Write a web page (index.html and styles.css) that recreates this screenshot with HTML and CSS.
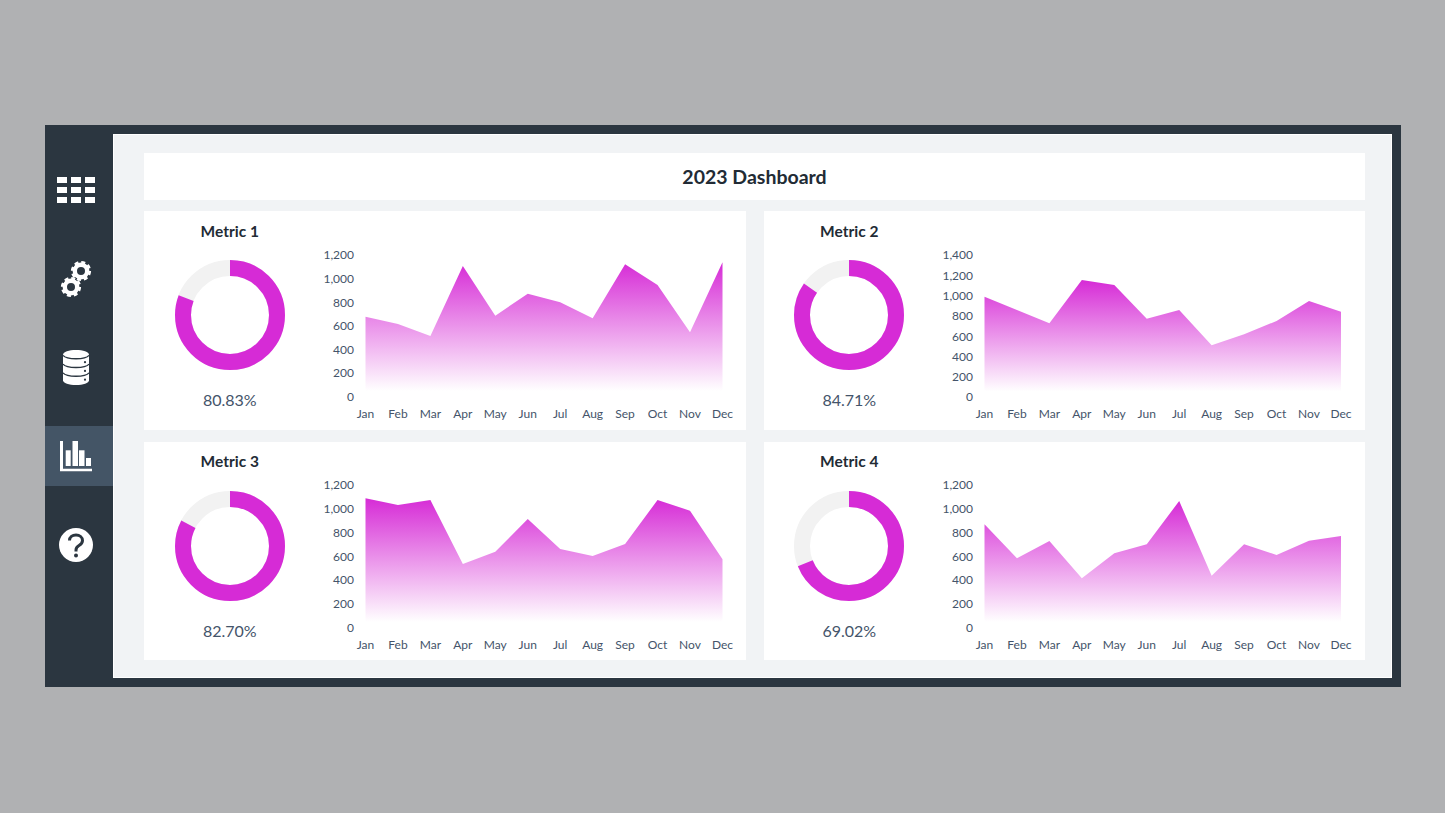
FILE: index.html
```html
<!DOCTYPE html>
<html lang="en">
<head>
    <meta charset="UTF-8">
    <title>2023 Dashboard</title>
    <link rel="stylesheet" href="styles.css">
</head>
<body>
    <div class="frame">
        <nav class="sidebar">
            <a class="nav-item" href="#">
                <svg class="icon" width="38" height="26" viewBox="0 0 38 26" fill="#fff">
                    <rect x="0" y="0" width="10" height="6"/><rect x="14" y="0" width="10" height="6"/><rect x="28" y="0" width="10" height="6"/>
                    <rect x="0" y="10" width="10" height="6"/><rect x="14" y="10" width="10" height="6"/><rect x="28" y="10" width="10" height="6"/>
                    <rect x="0" y="20" width="10" height="6"/><rect x="14" y="20" width="10" height="6"/><rect x="28" y="20" width="10" height="6"/>
                </svg>
            </a>
            <a class="nav-item" href="#">
                <svg class="icon" width="32" height="38" viewBox="0 0 32 38" fill="none" stroke="#fff">
                    <circle cx="21" cy="11" r="6.2" stroke-width="4.4"/>
                    <circle cx="21" cy="11" r="8.8" stroke-width="2.6" stroke-dasharray="4 2.91"/>
                    <circle cx="11" cy="27" r="6.2" stroke-width="4.4"/>
                    <circle cx="11" cy="27" r="8.8" stroke-width="2.6" stroke-dasharray="4 2.91"/>
                </svg>
            </a>
            <a class="nav-item" href="#">
                <svg class="icon" width="28" height="35" viewBox="0 0 28 36" preserveAspectRatio="none">
                    <path fill="#fff" d="M1 5C1 2 7 0 14 0s13 2 13 5v26c0 3-6 5-13 5S1 34 1 31z"/>
                    <path fill="none" stroke="#2b3640" stroke-width="1.4" d="M1 5.5C3 8 8 9 14 9s11-1 13-3.5M1 14.5C3 17 8 18 14 18s11-1 13-3.5M1 23.5C3 26 8 27 14 27s11-1 13-3.5"/>
                    <circle cx="23" cy="12.5" r="1.1" fill="#2b3640"/>
                    <circle cx="23" cy="21.5" r="1.1" fill="#2b3640"/>
                    <circle cx="23" cy="30.5" r="1.1" fill="#2b3640"/>
                </svg>
            </a>
            <a class="nav-item active" href="#">
                <svg class="icon" width="32" height="31" viewBox="0 0 32 31" fill="#fff">
                    <path d="M0 0h3v27.7h29v2.6H0z"/>
                    <rect x="5.7" y="9.3" width="5" height="15.7"/>
                    <rect x="12.5" y="0" width="5.5" height="25"/>
                    <rect x="19" y="9.3" width="5.5" height="15.7"/>
                    <rect x="26" y="17" width="5" height="8"/>
                </svg>
            </a>
            <a class="nav-item" href="#">
                <svg class="icon" width="34" height="34" viewBox="0 0 34 34">
                    <circle cx="17" cy="17" r="17" fill="#fff"/>
                    <path fill="none" stroke="#2b3640" stroke-width="3" d="M10.5 12.5C10.5 9 13.500 7 17 7c3.700 0 6.500 2.300 6.500 5.500 0 2.500-1.500 3.800-3.500 5-2 1.200-3 2.200-3 4.500v1.500"/>
                    <circle cx="17" cy="27.5" r="2" fill="#2b3640"/>
                </svg>
            </a>
        </nav>
        <main class="content">
            <header class="title-bar"><h1>2023 Dashboard</h1></header>
            <div class="cards">

                <section class="card">
                    <div class="metric">
                        <h2>Metric 1</h2>
                        <svg class="donut" width="110" height="110" viewBox="0 0 110 110">
                            <circle class="donut-track" cx="55" cy="55" r="47"/>
                            <circle class="donut-value" cx="55" cy="55" r="47" pathLength="100" stroke-dasharray="80.83 100"/>
                        </svg>
                        <p class="percent">80.83%</p>
                    </div>
                    <svg class="chart" width="429.5" height="218" viewBox="0 0 429.5 218">
                        <defs>
                            <linearGradient id="fill1" gradientUnits="userSpaceOnUse" x1="0" y1="51" x2="0" y2="180">
                                <stop offset="0" stop-color="#d62bd6"/><stop offset="1" stop-color="#d62bd6" stop-opacity="0"/>
                            </linearGradient>
                        </defs>
                        <polygon fill="url(#fill1)" points="49.5,105.7 81.95,113 114.4,125 146.85,55 179.3,104.7 211.75,82.7 244.2,91.3 276.65,107.3 309.1,53.3 341.55,74 374,121.3 406.5,51.3 406.5,180 49.5,180"/>
                        <g class="y-labels">
                            <text x="38" y="48.3">1,200</text><text x="38" y="72">1,000</text><text x="38" y="95.6">800</text><text x="38" y="119.2">600</text><text x="38" y="142.8">400</text><text x="38" y="166.4">200</text><text x="38" y="190.2">0</text>
                        </g>
                        <g class="x-labels">
                            <text x="49.5" y="207">Jan</text><text x="81.95" y="207">Feb</text><text x="114.4" y="207">Mar</text><text x="146.85" y="207">Apr</text><text x="179.3" y="207">May</text><text x="211.75" y="207">Jun</text><text x="244.2" y="207">Jul</text><text x="276.65" y="207">Aug</text><text x="309.1" y="207">Sep</text><text x="341.55" y="207">Oct</text><text x="374" y="207">Nov</text><text x="406.5" y="207">Dec</text>
                        </g>
                    </svg>
                </section>

                <section class="card">
                    <div class="metric">
                        <h2>Metric 2</h2>
                        <svg class="donut" width="110" height="110" viewBox="0 0 110 110">
                            <circle class="donut-track" cx="55" cy="55" r="47"/>
                            <circle class="donut-value" cx="55" cy="55" r="47" pathLength="100" stroke-dasharray="84.71 100"/>
                        </svg>
                        <p class="percent">84.71%</p>
                    </div>
                    <svg class="chart" width="429.5" height="218" viewBox="0 0 429.5 218">
                        <defs>
                            <linearGradient id="fill2" gradientUnits="userSpaceOnUse" x1="0" y1="69" x2="0" y2="180.5">
                                <stop offset="0" stop-color="#d62bd6"/><stop offset="1" stop-color="#d62bd6" stop-opacity="0"/>
                            </linearGradient>
                        </defs>
                        <polygon fill="url(#fill2)" points="49.5,85.7 81.95,99 114.4,112.3 146.85,69 179.3,74 211.75,107.7 244.2,99 276.65,134.3 309.1,123.3 341.55,110 374,90 406,100.7 406,180.5 49.5,180.5"/>
                        <g class="y-labels">
                            <text x="38" y="48.3">1,400</text><text x="38" y="68.6">1,200</text><text x="38" y="88.9">1,000</text><text x="38" y="109.2">800</text><text x="38" y="129.5">600</text><text x="38" y="149.8">400</text><text x="38" y="170">200</text><text x="38" y="190.2">0</text>
                        </g>
                        <g class="x-labels">
                            <text x="49.5" y="207">Jan</text><text x="81.95" y="207">Feb</text><text x="114.4" y="207">Mar</text><text x="146.85" y="207">Apr</text><text x="179.3" y="207">May</text><text x="211.75" y="207">Jun</text><text x="244.2" y="207">Jul</text><text x="276.65" y="207">Aug</text><text x="309.1" y="207">Sep</text><text x="341.55" y="207">Oct</text><text x="374" y="207">Nov</text><text x="406" y="207">Dec</text>
                        </g>
                    </svg>
                </section>

                <section class="card">
                    <div class="metric">
                        <h2>Metric 3</h2>
                        <svg class="donut" width="110" height="110" viewBox="0 0 110 110">
                            <circle class="donut-track" cx="55" cy="55" r="47"/>
                            <circle class="donut-value" cx="55" cy="55" r="47" pathLength="100" stroke-dasharray="82.7 100"/>
                        </svg>
                        <p class="percent">82.70%</p>
                    </div>
                    <svg class="chart" width="429.5" height="218" viewBox="0 0 429.5 218">
                        <defs>
                            <linearGradient id="fill3" gradientUnits="userSpaceOnUse" x1="0" y1="56" x2="0" y2="180">
                                <stop offset="0" stop-color="#d62bd6"/><stop offset="1" stop-color="#d62bd6" stop-opacity="0"/>
                            </linearGradient>
                        </defs>
                        <polygon fill="url(#fill3)" points="49.5,56.3 81.95,63 114.4,58 146.85,122 179.3,109.7 211.75,77 244.2,107 276.65,114 309.1,102 341.55,58 374,68.7 406.5,117.3 406.5,180 49.5,180"/>
                        <g class="y-labels">
                            <text x="38" y="47.3">1,200</text><text x="38" y="71">1,000</text><text x="38" y="95">800</text><text x="38" y="118.5">600</text><text x="38" y="142.3">400</text><text x="38" y="166">200</text><text x="38" y="189.5">0</text>
                        </g>
                        <g class="x-labels">
                            <text x="49.5" y="207">Jan</text><text x="81.95" y="207">Feb</text><text x="114.4" y="207">Mar</text><text x="146.85" y="207">Apr</text><text x="179.3" y="207">May</text><text x="211.75" y="207">Jun</text><text x="244.2" y="207">Jul</text><text x="276.65" y="207">Aug</text><text x="309.1" y="207">Sep</text><text x="341.55" y="207">Oct</text><text x="374" y="207">Nov</text><text x="406.5" y="207">Dec</text>
                        </g>
                    </svg>
                </section>

                <section class="card">
                    <div class="metric">
                        <h2>Metric 4</h2>
                        <svg class="donut" width="110" height="110" viewBox="0 0 110 110">
                            <circle class="donut-track" cx="55" cy="55" r="47"/>
                            <circle class="donut-value" cx="55" cy="55" r="47" pathLength="100" stroke-dasharray="69.02 100"/>
                        </svg>
                        <p class="percent">69.02%</p>
                    </div>
                    <svg class="chart" width="429.5" height="218" viewBox="0 0 429.5 218">
                        <defs>
                            <linearGradient id="fill4" gradientUnits="userSpaceOnUse" x1="0" y1="59" x2="0" y2="180">
                                <stop offset="0" stop-color="#d62bd6"/><stop offset="1" stop-color="#d62bd6" stop-opacity="0"/>
                            </linearGradient>
                        </defs>
                        <polygon fill="url(#fill4)" points="49.5,82.3 81.95,116.3 114.4,99 146.85,136.3 179.3,111.3 211.75,102.3 244.2,59 276.65,133.7 309.1,102.3 341.55,113 374,98.7 406,94 406,180 49.5,180"/>
                        <g class="y-labels">
                            <text x="38" y="47.3">1,200</text><text x="38" y="71">1,000</text><text x="38" y="95">800</text><text x="38" y="118.5">600</text><text x="38" y="142.3">400</text><text x="38" y="166">200</text><text x="38" y="189.5">0</text>
                        </g>
                        <g class="x-labels">
                            <text x="49.5" y="207">Jan</text><text x="81.95" y="207">Feb</text><text x="114.4" y="207">Mar</text><text x="146.85" y="207">Apr</text><text x="179.3" y="207">May</text><text x="211.75" y="207">Jun</text><text x="244.2" y="207">Jul</text><text x="276.65" y="207">Aug</text><text x="309.1" y="207">Sep</text><text x="341.55" y="207">Oct</text><text x="374" y="207">Nov</text><text x="406" y="207">Dec</text>
                        </g>
                    </svg>
                </section>

            </div>
        </main>
    </div>
</body>
</html>
```

FILE: styles.css
```css
* {
    box-sizing: border-box;
}

body {
    margin: 0;
    height: 813px;
    padding: 125px 44.5px 0;
    background-color: #b0b1b3;
    font-family: "Lato", "Open Sans", sans-serif;
    overflow: hidden;
}

.frame {
    display: flex;
    height: 562px;
    padding: 9px 8.5px 9px 0;
    background-color: #2b3640;
}

.sidebar {
    flex: 0 0 68.5px;
    display: flex;
    flex-direction: column;
    gap: 28.75px;
    margin-top: -9px;
    padding-top: 35px;
}

.nav-item {
    display: flex;
    align-items: center;
    justify-content: center;
    height: 60px;
    flex: none;
    padding-right: 5px;
}

.nav-item.active {
    background-color: #445566;
}

.icon {
    display: block;
}

.content {
    flex: 1;
    padding: 18px 26px 17px 30px;
    background-color: #f1f3f5;
    border: 1px solid #fff;
}

.title-bar {
    display: flex;
    align-items: center;
    justify-content: center;
    height: 47px;
    margin-bottom: 11px;
    background-color: #fff;
}

h1 {
    margin: 0;
    font-size: 19.5px;
    font-weight: 700;
    color: #222b35;
}

.cards {
    display: grid;
    grid-template-columns: 601.5px 601.5px;
    grid-template-rows: 219px 218px;
    justify-content: space-between;
    row-gap: 12px;
}

.card {
    display: flex;
    background-color: #fff;
}

.metric {
    flex: 0 0 171.5px;
    display: flex;
    flex-direction: column;
    align-items: center;
}

h2 {
    margin: 10px 0 0;
    font-size: 15.5px;
    line-height: 20px;
    font-weight: 700;
    color: #222b35;
}

/* bottom row sits a pixel tighter */
.card:nth-child(n+3) h2 {
    margin: 9px 0 1px;
}

.donut {
    display: block;
    margin-top: 19px;
}

.donut circle {
    fill: none;
    stroke-width: 16;
}

.donut-track {
    stroke: #f2f2f2;
}

.donut-value {
    stroke: #d62bd6;
    transform: rotate(-90deg);
    transform-origin: 55px 55px;
}

.percent {
    margin: 19px 0 0;
    font-size: 16px;
    line-height: 22px;
    color: #44546a;
}

.chart {
    display: block;
    flex: none;
}

.chart text {
    font-size: 12px;
    fill: #44546a;
}

.y-labels text {
    text-anchor: end;
}

.x-labels text {
    text-anchor: middle;
}
```
